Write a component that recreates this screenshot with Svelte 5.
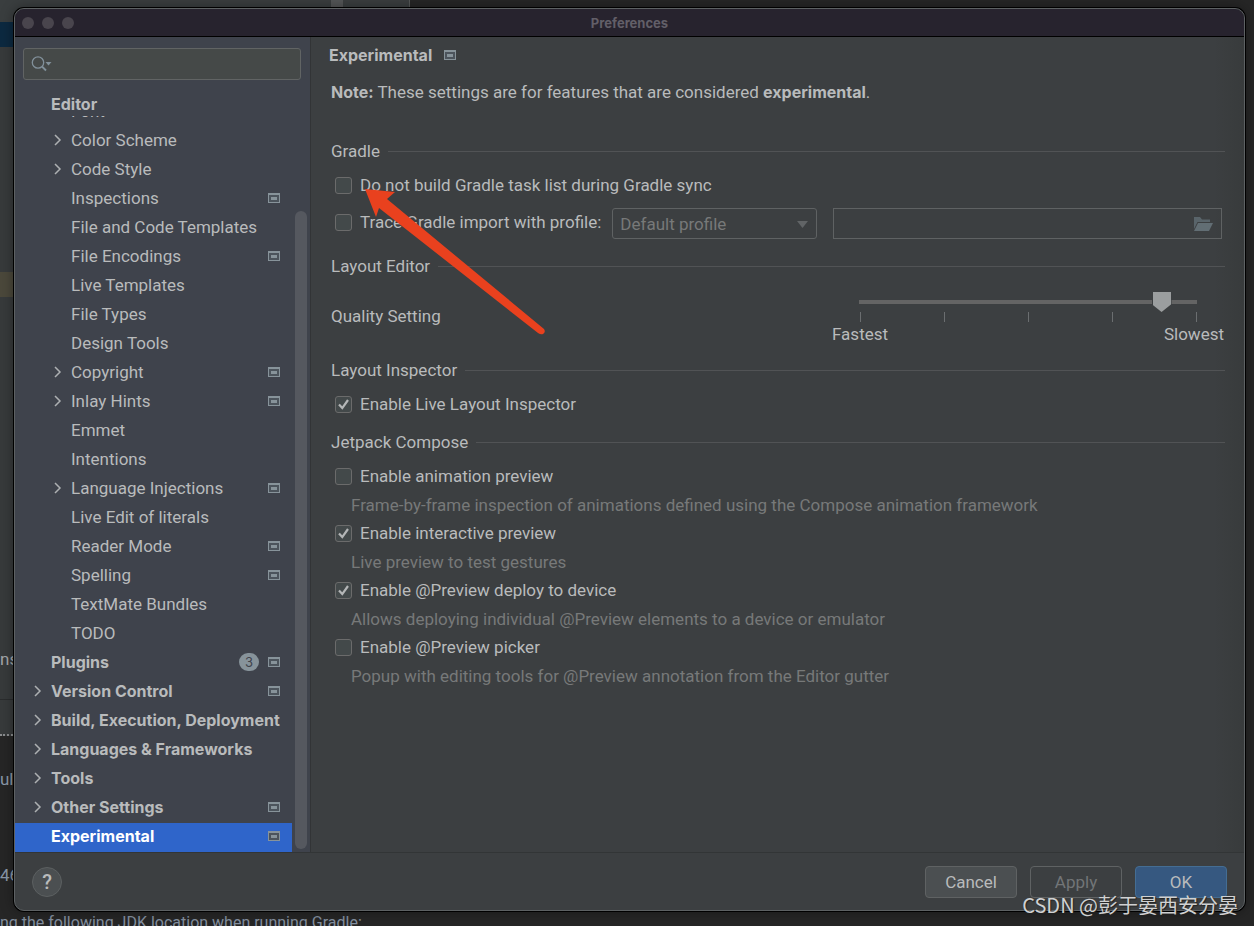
<script>
    let search = $state('');
    let selected = $state('Experimental');
    let profile = $state('Default profile');
    let profilePath = $state('');
    let quality = $state(92);

    // child = one level under Editor, project = shows the "per project" icon
    const items = [
        { name: 'Font', child: true },
        { name: 'Color Scheme', child: true, arrow: true },
        { name: 'Code Style', child: true, arrow: true },
        { name: 'Inspections', child: true, project: true },
        { name: 'File and Code Templates', child: true },
        { name: 'File Encodings', child: true, project: true },
        { name: 'Live Templates', child: true },
        { name: 'File Types', child: true },
        { name: 'Design Tools', child: true },
        { name: 'Copyright', child: true, arrow: true, project: true },
        { name: 'Inlay Hints', child: true, arrow: true, project: true },
        { name: 'Emmet', child: true },
        { name: 'Intentions', child: true },
        { name: 'Language Injections', child: true, arrow: true, project: true },
        { name: 'Live Edit of literals', child: true },
        { name: 'Reader Mode', child: true, project: true },
        { name: 'Spelling', child: true, project: true },
        { name: 'TextMate Bundles', child: true },
        { name: 'TODO', child: true },
        { name: 'Plugins', badge: 3, project: true },
        { name: 'Version Control', arrow: true, project: true },
        { name: 'Build, Execution, Deployment', arrow: true },
        { name: 'Languages & Frameworks', arrow: true },
        { name: 'Tools', arrow: true },
        { name: 'Other Settings', arrow: true, project: true },
        { name: 'Experimental', project: true }
    ];

    let compose = $state([
        { label: 'Enable animation preview', checked: false, hint: 'Frame-by-frame inspection of animations defined using the Compose animation framework' },
        { label: 'Enable interactive preview', checked: true, hint: 'Live preview to test gestures' },
        { label: 'Enable @Preview deploy to device', checked: true, hint: 'Allows deploying individual @Preview elements to a device or emulator' },
        { label: 'Enable @Preview picker', checked: false, hint: 'Popup with editing tools for @Preview annotation from the Editor gutter' }
    ]);

    let skipTaskList = $state(false);
    let traceImport = $state(false);
    let liveInspector = $state(true);
</script>

{#snippet projectIcon()}
    <svg class="project-icon" width="12" height="10" viewBox="0 0 12 10" aria-hidden="true">
        <path fill="#87939a" d="M0 0h12v10H0z" />
        <path fill="#4c545c" d="M1 2h10v7H1z" />
        <path fill="#87939a" d="M3 4h6v3H3z" />
    </svg>
{/snippet}

{#snippet checkMark()}
    <svg class="mark" width="17" height="17" viewBox="0 0 17 17" aria-hidden="true">
        <path d="M4 8.500l3.300 3.600L13 4" fill="none" stroke="#b4b6b7" stroke-width="2.200" />
    </svg>
{/snippet}

<div class="desktop">
    <!-- IDE window behind the dialog -->
    <div class="ide" aria-hidden="true">
        <div class="toolbar"><span class="grip"></span></div>
        <div class="band navy"></div>
        <div class="band tall"></div>
        <div class="band brown"></div>
        <div class="band pane">ns</div>
        <div class="band row-line"></div>
        <div class="band log"><span>ully</span><span>46</span></div>
        <div class="message">ng the following JDK location when running Gradle:</div>
    </div>

    <div class="dialog" role="dialog" aria-label="Preferences">
        <header class="titlebar">
            <div class="lights"><i></i><i></i><i></i></div>
            <h1>Preferences</h1>
        </header>

        <div class="body">
            <aside class="sidebar">
                <label class="search">
                    <svg width="22" height="18" viewBox="0 0 22 18" aria-hidden="true">
                        <circle cx="7" cy="7.5" r="5.7" fill="none" stroke="#81909a" stroke-width="1.3" />
                        <path d="M11 11.5l4 4" stroke="#81909a" stroke-width="1.8" />
                        <path d="M14.5 7h6l-3 3.6z" fill="#81909a" />
                    </svg>
                    <input type="text" aria-label="Search settings" bind:value={search} />
                </label>
                <h2 class="group">Editor</h2>
                <div class="scroller">
                    <ul class="tree">
                        {#each items as item}
                            <li>
                                <button
                                    class="node"
                                    class:child={item.child}
                                    class:selected={selected === item.name}
                                    onclick={() => (selected = item.name)}
                                >
                                    <span class="chevron">
                                        {#if item.arrow}
                                            <svg width="8" height="12" viewBox="0 0 8 12" aria-hidden="true">
                                                <path d="M1 1l5 5-5 5" fill="none" stroke="#adb0b2" stroke-width="1.5" />
                                            </svg>
                                        {/if}
                                    </span>
                                    <span class="name">{item.name}</span>
                                    {#if item.badge}
                                        <span class="badge">{item.badge}</span>
                                    {/if}
                                    {#if item.project}
                                        {@render projectIcon()}
                                    {/if}
                                </button>
                            </li>
                        {/each}
                    </ul>
                    <div class="track"><div class="thumb"></div></div>
                </div>
            </aside>

            <main class="content">
                <div class="page-title">
                    <h2>Experimental</h2>
                    {@render projectIcon()}
                </div>

                <div class="settings">
                    <p class="note"><b>Note:</b> These settings are for features that are considered <b>experimental</b>.</p>

                    <h3>Gradle</h3>
                    <label class="check">
                        <span class="box"><input type="checkbox" bind:checked={skipTaskList} />{@render checkMark()}</span>
                        Do not build Gradle task list during Gradle sync
                    </label>
                    <div class="trace">
                        <label class="check">
                            <span class="box"><input type="checkbox" bind:checked={traceImport} />{@render checkMark()}</span>
                            Trace Gradle import with profile:
                        </label>
                        <div class="select">
                            <select aria-label="Profile" bind:value={profile} disabled={!traceImport}>
                                <option>Default profile</option>
                                <option>Specified location</option>
                            </select>
                            <svg width="11" height="7" viewBox="0 0 11 7" aria-hidden="true"><path d="M0 0h11L5.500 7z" fill="#616466" /></svg>
                        </div>
                        <div class="path">
                            <input type="text" aria-label="Profile location" bind:value={profilePath} disabled={!traceImport} />
                            <button aria-label="Browse" disabled={!traceImport}>
                                <svg width="20" height="16" viewBox="0 0 20 16" aria-hidden="true">
                                    <path d="M1 1h6l2 2.500h8V6H4.500L1 13z" fill="#59646a" />
                                    <path d="M5 7h15l-4 8H1z" fill="#626e74" />
                                </svg>
                            </button>
                        </div>
                    </div>

                    <h3>Layout Editor</h3>
                    <div class="quality">
                        <label for="quality">Quality Setting</label>
                        <div class="slider">
                            <input id="quality" type="range" min="0" max="100" bind:value={quality} />
                            <div class="ticks"><i></i><i></i><i></i><i></i><i></i></div>
                            <div class="ends"><span>Fastest</span><span>Slowest</span></div>
                        </div>
                    </div>

                    <h3>Layout Inspector</h3>
                    <label class="check">
                        <span class="box"><input type="checkbox" bind:checked={liveInspector} />{@render checkMark()}</span>
                        Enable Live Layout Inspector
                    </label>

                    <h3>Jetpack Compose</h3>
                    {#each compose as option}
                        <label class="check">
                            <span class="box"><input type="checkbox" bind:checked={option.checked} />{@render checkMark()}</span>
                            {option.label}
                        </label>
                        <p class="hint">{option.hint}</p>
                    {/each}
                </div>
            </main>
        </div>

        <footer>
            <button class="help" aria-label="Help">?</button>
            <button class="btn">Cancel</button>
            <button class="btn apply" disabled>Apply</button>
            <button class="btn ok">OK</button>
        </footer>
    </div>

    <!-- red pointer to the first check box -->
    <svg class="pointer" width="182" height="148" viewBox="0 0 182 148" aria-hidden="true">
        <path d="M0 1L30 4L22 11L179 141Q181 144 178 146Q176 147 173 145L14 20L11 29z" fill="#e9411e" />
    </svg>
    <div class="watermark">CSDN @彭于晏西安分晏</div>
</div>

<style>
:global(body) {
    background: #262626;
}

.desktop {
    position: relative;
    display: flex;
    flex-direction: column;
    box-sizing: border-box;
    min-height: 100vh;
    padding: 8px 9px 15px 14px;
    overflow: hidden;
    font-family: Roboto, "Liberation Sans", sans-serif;
    font-size: 17px;
    line-height: 20px;
    color: #b9bbbc;
}

.desktop * {
    box-sizing: border-box;
}

h1, h2, h3, p, ul {
    margin: 0;
    padding: 0;
}

h1, h2, b {
    font-family: Inter, "Liberation Sans", sans-serif;
    font-size: 16px;
    font-weight: 700;
}

button, input, select {
    font: inherit;
    color: inherit;
}

/* window behind */
.ide {
    position: absolute;
    inset: 0;
    display: flex;
    flex-direction: column;
    background: #262626;
    color: #a4a7a9;
}

.toolbar {
    width: 410px;
    height: 22px;
    flex: none;
    background: #3a3e3f;
    border-right: 1px solid #555858;
}

.grip {
    display: block;
    width: 12px;
    height: 22px;
    margin-left: 331px;
    background: #545657;
}

.band {
    width: 20px;
    flex: none;
    background: #373a3b;
}

.navy {
    height: 25px;
    background: #0c2940;
}

.tall {
    height: 225px;
}

.brown {
    height: 25px;
    background: #4b483b;
}

.pane {
    height: 403px;
    padding-top: 352px;
    border-bottom: 1px solid #2a2c2d;
}

.row-line {
    height: 36px;
    border-bottom: 2px dotted #8a8c8e;
}

.log {
    display: flex;
    flex-direction: column;
    gap: 76px;
    height: 177px;
    padding-top: 33px;
    background: #262626;
    color: #8b98a8;
}

.message {
    font-size: 16px;
    color: #8490a0;
    white-space: nowrap;
}

/* dialog */
.dialog {
    position: relative;
    display: flex;
    flex-direction: column;
    flex: 1;
    overflow: hidden;
    background: #3c3f41;
    border: 1px solid #5d6163;
    border-radius: 10px;
    box-shadow: 0 0 0 1px #000, 0 0 14px rgba(0, 0, 0, 0.4);
}

.titlebar {
    display: grid;
    grid-template-columns: 1fr auto 1fr;
    align-items: center;
    height: 28px;
    padding: 0 7px;
    background: #27232e;
    border-bottom: 1px solid #000;
}

.titlebar h1 {
    font-size: 13px;
    color: #625f68;
}

.lights {
    display: flex;
    gap: 8px;
}

.lights i {
    width: 12px;
    height: 12px;
    border-radius: 50%;
    background: #49454d;
}

.body {
    display: flex;
    flex: 1;
}

.sidebar {
    display: flex;
    flex-direction: column;
    width: 296px;
    flex: none;
    background: #3f434c;
    border-right: 1px solid #323436;
}

.search {
    display: flex;
    align-items: center;
    height: 32px;
    margin: 11px 9px 0 8px;
    padding: 0 7px;
    background: #454948;
    border: 1px solid #616464;
    border-radius: 3px;
}

.search input {
    flex: 1;
    min-width: 0;
    background: none;
    border: 0;
    outline: 0;
}

.group {
    margin-top: 14px;
    padding: 0 0 2px 36px;
}

/* the list is scrolled to its end, so it is anchored at the bottom */
.scroller {
    display: flex;
    align-items: flex-end;
    flex: 1 0 0;
    height: 0;
    min-height: 0;
    overflow: hidden;
}

.tree {
    flex: 1;
    list-style: none;
}

.node {
    display: flex;
    align-items: center;
    width: 100%;
    height: 29px;
    padding: 0 12px 3px 19px;
    background: none;
    border: 0;
    text-align: left;
    font-family: Inter, "Liberation Sans", sans-serif;
    font-size: 16px;
    font-weight: 700;
    white-space: nowrap;
}

.node.child {
    padding-left: 39px;
    font-family: Roboto, "Liberation Sans", sans-serif;
    font-size: 17px;
    font-weight: 400;
}

.node.selected {
    background: #2f65ca;
    color: #fff;
}

.chevron {
    display: flex;
    width: 17px;
    flex: none;
}

.name {
    flex: 1;
}

.badge {
    width: 20px;
    height: 18px;
    margin-right: 9px;
    border-radius: 9px;
    background: #87939a;
    color: #3f434c;
    font-size: 13px;
    font-weight: 400;
    line-height: 18px;
    text-align: center;
}

.project-icon {
    flex: none;
}

.track {
    display: flex;
    align-items: flex-end;
    align-self: stretch;
    width: 18px;
    padding: 0 3px 3px;
}

.thumb {
    width: 100%;
    height: 87%;
    border-radius: 6px;
    background: #55585f;
}

.content {
    flex: 1;
    min-width: 0;
    padding: 8px 19px 0 18px;
    background: linear-gradient(to left, #383b3c, #3c3f41 30px);
}

.page-title {
    display: flex;
    align-items: center;
    gap: 12px;
}

.settings {
    padding: 17px 0 0 2px;
}

.note {
    margin-bottom: 39px;
}

h3 {
    display: flex;
    align-items: center;
    gap: 8px;
    margin: 14px 0 10px;
    font-size: 17px;
    font-weight: 400;
}

.note + h3 {
    margin-top: 0;
}

h3::after {
    content: "";
    flex: 1;
    height: 1px;
    background: #515355;
}

.check {
    display: flex;
    align-items: center;
    gap: 8px;
    height: 28px;
    padding-left: 4px;
    white-space: nowrap;
}

.box {
    display: grid;
    width: 17px;
    height: 17px;
}

.box input,
.box .mark {
    grid-area: 1 / 1;
}

.box input {
    appearance: none;
    width: 17px;
    height: 17px;
    margin: 0;
    background: #43494a;
    border: 1px solid #6b6b6b;
    border-radius: 3px;
}

.mark {
    visibility: hidden;
    pointer-events: none;
}

.box input:checked + .mark {
    visibility: visible;
}

.hint {
    padding: 1px 0 0 20px;
    line-height: 28px;
    color: #777979;
}

.trace {
    display: flex;
    align-items: flex-start;
    gap: 16px;
    padding: 9px 3px 3px 0;
}

.trace .check {
    margin-right: -5px;
}

.select {
    position: relative;
    width: 205px;
    height: 31px;
    color: #777979;
}

.select select {
    appearance: none;
    width: 100%;
    height: 100%;
    padding: 0 7px;
    background: transparent;
    border: 1px solid #5f6263;
    border-radius: 3px;
    opacity: 1;
}

.select svg {
    position: absolute;
    right: 9px;
    top: 13px;
    pointer-events: none;
}

.path {
    display: flex;
    align-items: center;
    flex: 1;
    height: 31px;
    border: 1px solid #5f6263;
}

.path input {
    flex: 1;
    min-width: 0;
    background: none;
    border: 0;
}

.path button {
    display: flex;
    padding: 0 8px;
    background: none;
    border: 0;
}

.quality {
    display: flex;
    align-items: center;
    justify-content: space-between;
    height: 60px;
    padding-right: 1px;
}

.slider {
    width: 392px;
    padding-top: 4px;
}

.slider input {
    appearance: none;
    display: block;
    width: 338px;
    height: 20px;
    margin: 0 auto;
    background: none;
}

.slider input::-webkit-slider-runnable-track {
    height: 4px;
    background: #646464;
}

.slider input::-webkit-slider-thumb {
    appearance: none;
    width: 20px;
    height: 20px;
    margin-top: -8px;
    background: linear-gradient(to right, #3c3f41 1px, #9b9e9f 1px, #9b9e9f 19px, #3c3f41 19px);
    clip-path: polygon(0 0, 100% 0, 100% 60%, 50% 100%, 0 60%);
}

.ticks {
    display: flex;
    justify-content: space-between;
    height: 10px;
    padding: 0 27px 0 28px;
}

.ticks i {
    width: 1px;
    background: #6b6e70;
}

.ends {
    display: flex;
    justify-content: space-between;
    margin-top: 2px;
}

footer {
    display: flex;
    align-items: center;
    gap: 13px;
    padding: 13px 17px 12px;
    border-top: 1px solid #323536;
}

.help {
    width: 30px;
    height: 30px;
    margin-right: auto;
    padding: 0;
    background: #4b4f51;
    border: 1px solid #5c6061;
    border-radius: 50%;
    font-size: 20px;
    font-weight: 500;
}

.btn {
    width: 92px;
    height: 32px;
    padding: 0;
    background: #4b4f51;
    border: 1px solid #5f6263;
    border-radius: 4px;
}

.apply {
    background: transparent;
    color: #727577;
}

.ok {
    background: #365880;
    border-color: #446d93;
}

.pointer {
    position: absolute;
    left: 365px;
    top: 188px;
    pointer-events: none;
}

.watermark {
    position: absolute;
    right: 16px;
    bottom: 6px;
    font-family: "Noto Sans CJK SC", sans-serif;
    font-size: 20px;
    line-height: 30px;
    color: #d0d1d2;
    text-shadow: 1px 1px 1px #222;
    pointer-events: none;
}
</style>
